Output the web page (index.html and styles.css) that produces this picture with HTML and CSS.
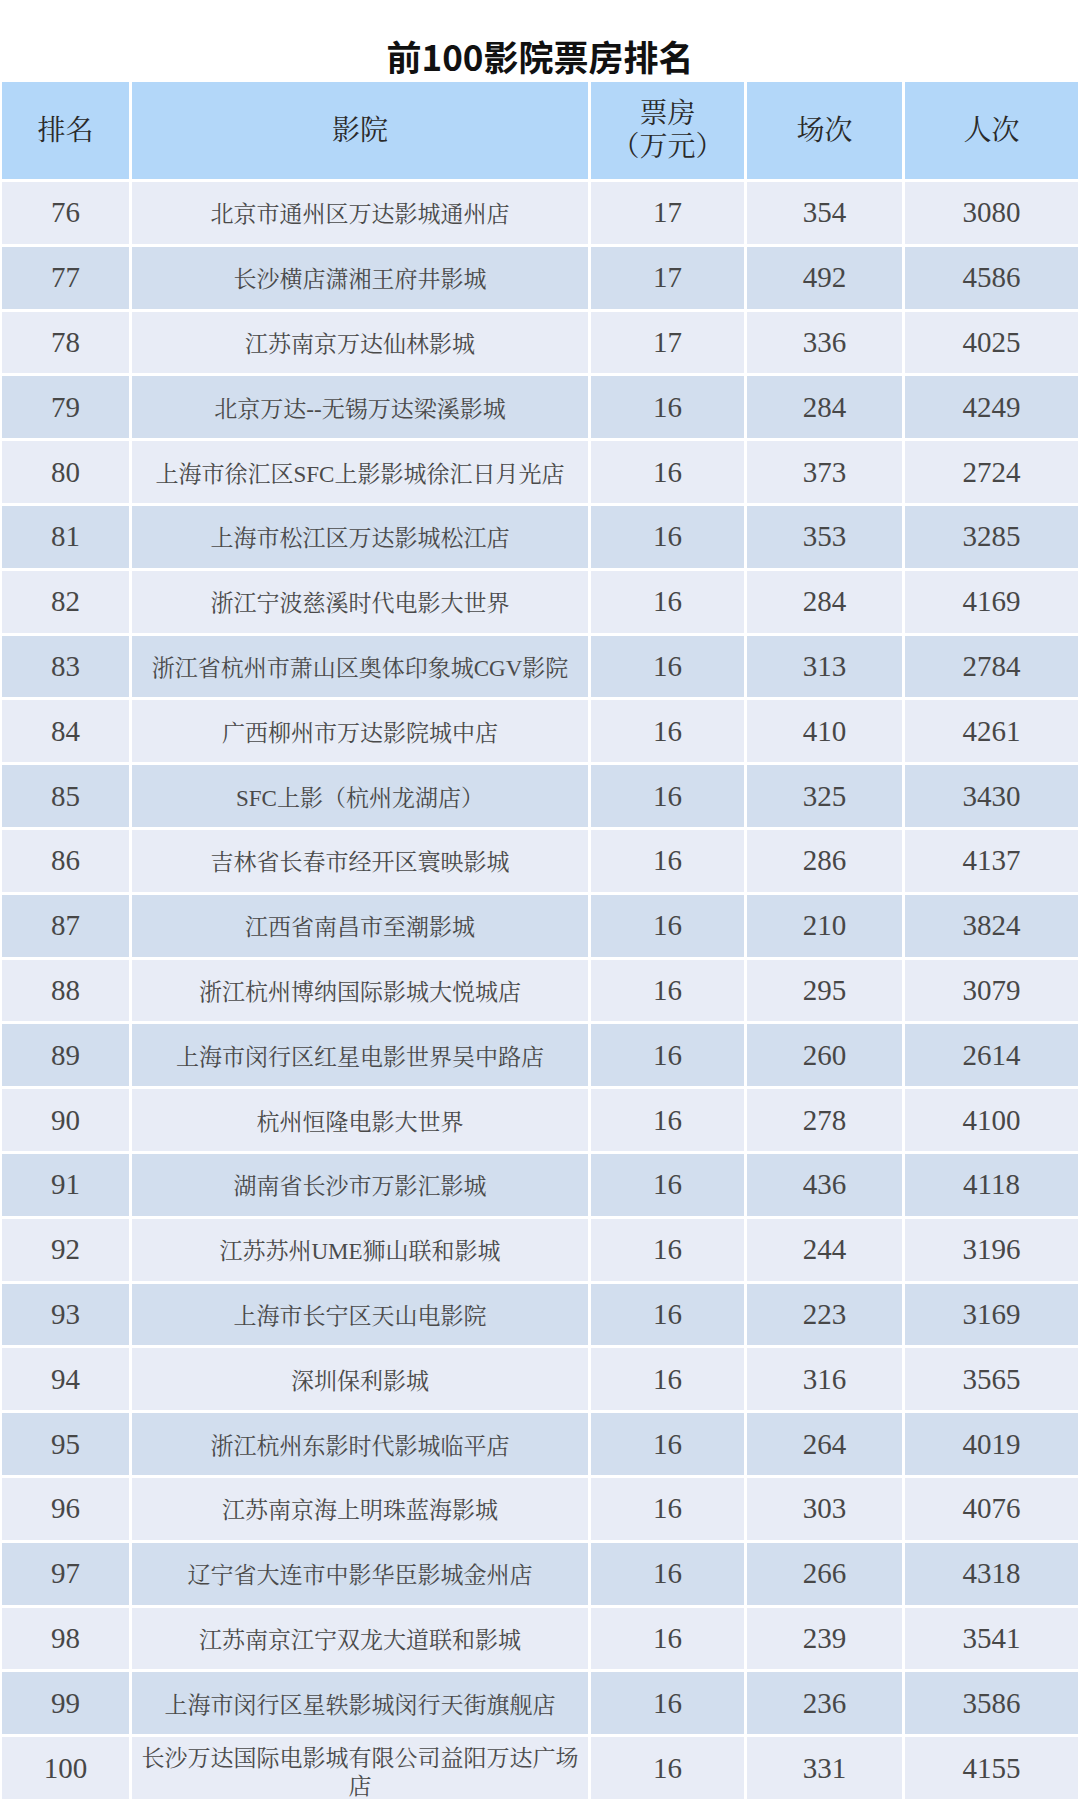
FILE: index.html
```html
<!DOCTYPE html>
<html lang="zh-CN">
<head>
<meta charset="utf-8">
<title>前100影院票房排名</title>
<link rel="stylesheet" href="styles.css">
</head>
<body>
<h1 class="title">前100影院票房排名</h1>
<div class="table">
  <div class="row head">
    <div class="cell">排名</div>
    <div class="cell">影院</div>
    <div class="cell two">票房<br>（万元）</div>
    <div class="cell">场次</div>
    <div class="cell">人次</div>
  </div>
  <div class="row odd"><div class="cell num">76</div><div class="cell name">北京市通州区万达影城通州店</div><div class="cell num">17</div><div class="cell num">354</div><div class="cell num">3080</div></div>
  <div class="row even"><div class="cell num">77</div><div class="cell name">长沙横店潇湘王府井影城</div><div class="cell num">17</div><div class="cell num">492</div><div class="cell num">4586</div></div>
  <div class="row odd"><div class="cell num">78</div><div class="cell name">江苏南京万达仙林影城</div><div class="cell num">17</div><div class="cell num">336</div><div class="cell num">4025</div></div>
  <div class="row even"><div class="cell num">79</div><div class="cell name">北京万达--无锡万达梁溪影城</div><div class="cell num">16</div><div class="cell num">284</div><div class="cell num">4249</div></div>
  <div class="row odd"><div class="cell num">80</div><div class="cell name">上海市徐汇区SFC上影影城徐汇日月光店</div><div class="cell num">16</div><div class="cell num">373</div><div class="cell num">2724</div></div>
  <div class="row even"><div class="cell num">81</div><div class="cell name">上海市松江区万达影城松江店</div><div class="cell num">16</div><div class="cell num">353</div><div class="cell num">3285</div></div>
  <div class="row odd"><div class="cell num">82</div><div class="cell name">浙江宁波慈溪时代电影大世界</div><div class="cell num">16</div><div class="cell num">284</div><div class="cell num">4169</div></div>
  <div class="row even"><div class="cell num">83</div><div class="cell name">浙江省杭州市萧山区奥体印象城CGV影院</div><div class="cell num">16</div><div class="cell num">313</div><div class="cell num">2784</div></div>
  <div class="row odd"><div class="cell num">84</div><div class="cell name">广西柳州市万达影院城中店</div><div class="cell num">16</div><div class="cell num">410</div><div class="cell num">4261</div></div>
  <div class="row even"><div class="cell num">85</div><div class="cell name">SFC上影（杭州龙湖店）</div><div class="cell num">16</div><div class="cell num">325</div><div class="cell num">3430</div></div>
  <div class="row odd"><div class="cell num">86</div><div class="cell name">吉林省长春市经开区寰映影城</div><div class="cell num">16</div><div class="cell num">286</div><div class="cell num">4137</div></div>
  <div class="row even"><div class="cell num">87</div><div class="cell name">江西省南昌市至潮影城</div><div class="cell num">16</div><div class="cell num">210</div><div class="cell num">3824</div></div>
  <div class="row odd"><div class="cell num">88</div><div class="cell name">浙江杭州博纳国际影城大悦城店</div><div class="cell num">16</div><div class="cell num">295</div><div class="cell num">3079</div></div>
  <div class="row even"><div class="cell num">89</div><div class="cell name">上海市闵行区红星电影世界吴中路店</div><div class="cell num">16</div><div class="cell num">260</div><div class="cell num">2614</div></div>
  <div class="row odd"><div class="cell num">90</div><div class="cell name">杭州恒隆电影大世界</div><div class="cell num">16</div><div class="cell num">278</div><div class="cell num">4100</div></div>
  <div class="row even"><div class="cell num">91</div><div class="cell name">湖南省长沙市万影汇影城</div><div class="cell num">16</div><div class="cell num">436</div><div class="cell num">4118</div></div>
  <div class="row odd"><div class="cell num">92</div><div class="cell name">江苏苏州UME狮山联和影城</div><div class="cell num">16</div><div class="cell num">244</div><div class="cell num">3196</div></div>
  <div class="row even"><div class="cell num">93</div><div class="cell name">上海市长宁区天山电影院</div><div class="cell num">16</div><div class="cell num">223</div><div class="cell num">3169</div></div>
  <div class="row odd"><div class="cell num">94</div><div class="cell name">深圳保利影城</div><div class="cell num">16</div><div class="cell num">316</div><div class="cell num">3565</div></div>
  <div class="row even"><div class="cell num">95</div><div class="cell name">浙江杭州东影时代影城临平店</div><div class="cell num">16</div><div class="cell num">264</div><div class="cell num">4019</div></div>
  <div class="row odd"><div class="cell num">96</div><div class="cell name">江苏南京海上明珠蓝海影城</div><div class="cell num">16</div><div class="cell num">303</div><div class="cell num">4076</div></div>
  <div class="row even"><div class="cell num">97</div><div class="cell name">辽宁省大连市中影华臣影城金州店</div><div class="cell num">16</div><div class="cell num">266</div><div class="cell num">4318</div></div>
  <div class="row odd"><div class="cell num">98</div><div class="cell name">江苏南京江宁双龙大道联和影城</div><div class="cell num">16</div><div class="cell num">239</div><div class="cell num">3541</div></div>
  <div class="row even"><div class="cell num">99</div><div class="cell name">上海市闵行区星轶影城闵行天街旗舰店</div><div class="cell num">16</div><div class="cell num">236</div><div class="cell num">3586</div></div>
  <div class="row odd"><div class="cell num">100</div><div class="cell name wrap">长沙万达国际电影城有限公司益阳万达广场<br>店</div><div class="cell num">16</div><div class="cell num">331</div><div class="cell num">4155</div></div>
</div>
</body>
</html>
```

FILE: styles.css
```css
html, body {
  margin: 0;
  padding: 0;
  background: #ffffff;
}

body {
  width: 1080px;
  height: 1800px;
  overflow: hidden;
  font-family: "Liberation Serif", "Noto Serif CJK SC", "Noto Sans CJK SC", serif;
  color: #3c3c3c;
}

.title {
  margin: 0;
  height: 82px;
  box-sizing: border-box;
  padding-top: 35px;
  text-align: center;
  font-family: "Noto Sans CJK SC", "Noto Sans", sans-serif;
  font-weight: 700;
  font-size: 35px;
  line-height: 42px;
  color: #111111;
}

.table {
  display: flex;
  flex-direction: column;
  gap: 3px;
  margin-left: 2px;
  width: 1076px;
}

.row {
  display: grid;
  grid-template-columns: 127px 456px 153px 155px 173px;
  column-gap: 3px;
  height: 61.8px;
}

.row.head {
  height: 97px;
}

.cell {
  display: flex;
  align-items: center;
  justify-content: center;
  text-align: center;
  overflow: hidden;
}

.head .cell {
  background: #b3d7f9;
  font-size: 28px;
  line-height: 33px;
  color: #2a2a2a;
}

.head .cell.two {
  padding-bottom: 2px;
}

.odd .cell {
  background: #e8ecf6;
}

.even .cell {
  background: #d2deee;
}

.cell.num {
  font-size: 29px;
  color: #474747;
}

.cell.name {
  font-size: 23px;
  color: #4a4a4a;
  white-space: nowrap;
}

.cell.name.wrap {
  line-height: 28px;
  padding-top: 10px;
}
```
